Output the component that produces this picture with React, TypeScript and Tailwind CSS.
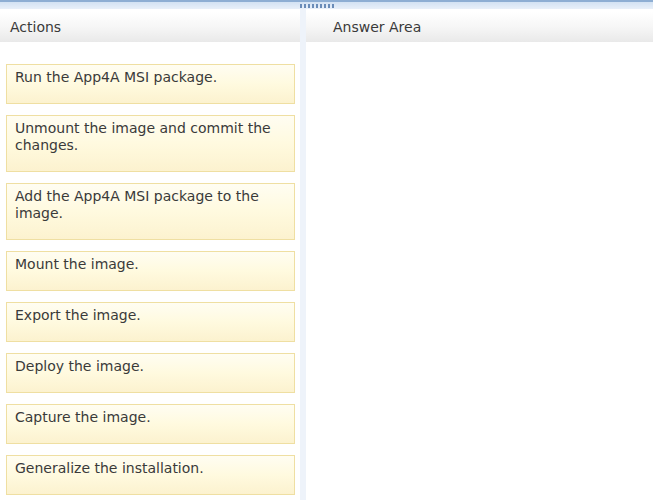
const actions = [
  'Run the App4A MSI package.',
  'Unmount the image and commit the changes.',
  'Add the App4A MSI package to the image.',
  'Mount the image.',
  'Export the image.',
  'Deploy the image.',
  'Capture the image.',
  'Generalize the installation.',
];

export default function App() {
  return (
    <div
      className="w-[653px] h-[500px] overflow-hidden bg-white text-[14px] text-[#3a3a3a]"
      style={{ fontFamily: '"DejaVu Sans", Verdana, sans-serif' }}
    >
      {/* top splitter bar */}
      <div className="h-[9px] border-t-2 border-[#8eaed3] bg-gradient-to-b from-[#d3e2f3] to-[#e9f0f9] flex justify-start">
        <div className="ml-[300px] mt-[2px] flex gap-[2px]">
          {Array.from({ length: 9 }).map((_, i) => (
            <div key={i} className="w-[2px] h-[4px] bg-[#6a8cb8]" />
          ))}
        </div>
      </div>

      <div className="flex h-[491px]">
        {/* Actions */}
        <div className="w-[300px] flex flex-col">
          <div className="h-[30px] mt-[3px] flex items-center pl-[10px] bg-gradient-to-b from-white via-[#f6f6f6] to-[#e9e9e9]">
            Actions
          </div>
          <div className="flex flex-col gap-[11px] pl-[6px] pr-[5px] pt-[22px]">
            {actions.map((a) => (
              <div
                key={a}
                className="border border-[#efdfa2] bg-gradient-to-b from-[#fffdf2] via-[#fffadf] to-[#fcf2cf] pl-[8px] pr-[10px] pt-[4px] pb-[17px] leading-[17px]"
              >
                {a}
              </div>
            ))}
          </div>
        </div>

        {/* divider */}
        <div className="w-[6px] bg-[#eef3fa]" />

        {/* Answer Area */}
        <div className="flex-1 flex flex-col">
          <div className="h-[30px] mt-[3px] flex items-center pl-[27px] bg-gradient-to-b from-white via-[#f6f6f6] to-[#e9e9e9]">
            Answer Area
          </div>
        </div>
      </div>
    </div>
  );
}
